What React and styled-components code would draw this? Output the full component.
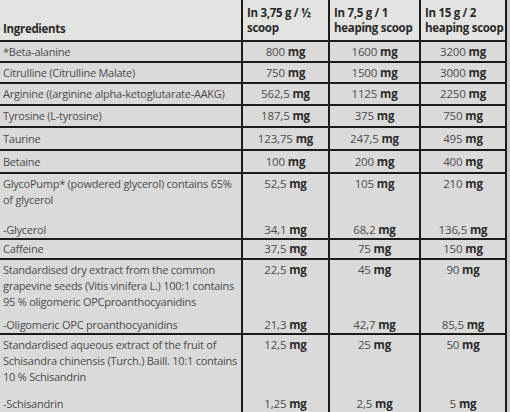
import React from 'react';
import styled, { createGlobalStyle } from 'styled-components';

const GlobalStyle = createGlobalStyle`
  html, body {
    margin: 0;
    padding: 0;
    background: #c9c8c8;
  }
  body {
    font-family: 'Open Sans', 'Liberation Sans', sans-serif;
  }
`;

const Table = styled.div`
  width: 505px;
  height: 412px;
  overflow: hidden;
  display: flex;
  flex-direction: column;
  gap: 2px;
  background: #1b1b1b;
  border-right: 2px solid #1b1b1b;
`;

const Row = styled.div`
  display: grid;
  grid-template-columns: 241px 85px 89px 84px;
  column-gap: 2px;
  height: ${props => props.h}px;
  flex-shrink: 0;
`;

const Cell = styled.div`
  background: ${props => props.head ? '#e3e3e2' : '#dbdada'};
  display: flex;
  flex-direction: column;
  justify-content: ${props => props.multi ? 'space-between' : 'center'};
  align-items: ${props => props.center ? 'center' : 'flex-start'};
  padding: ${props => props.multi ? '2px 3px 0' : '0 3px'};
  font-size: ${props => props.center ? '11.5px' : '11px'};
  line-height: 16px;
  color: #4c4c4c;
  letter-spacing: ${props => props.center ? '-0.15px' : '-0.25px'};
  white-space: nowrap;
  overflow: hidden;
`;

const HeadCell = styled(Cell)`
  justify-content: ${props => props.bottom ? 'flex-end' : 'flex-start'};
  padding: ${props => props.bottom ? '0 3px 4px' : '5px 4px 0'};
  font-weight: 700;
  font-size: 11.5px;
  line-height: 15px;
  color: #2a2a2a;
  letter-spacing: -0.3px;
`;

const Unit = styled.b`
  font-weight: 700;
  color: #2b2b2b;
`;

const Value = ({ n }) => (
  <span>{n} <Unit>mg</Unit></span>
);

const rows = [
  { name: ['*Beta-alanine'], v: ['800', '1600', '3200'], h: 19 },
  { name: ['Citrulline (Citrulline Malate)'], v: ['750', '1500', '3000'], h: 19 },
  { name: ['Arginine ((arginine alpha-ketoglutarate-AAKG)'], v: ['562,5', '1125', '2250'], h: 20 },
  { name: ['Tyrosine (L-tyrosine)'], v: ['187,5', '375', '750'], h: 20 },
  { name: ['Taurine'], v: ['123,75', '247,5', '495'], h: 21 },
  { name: ['Betaine'], v: ['100', '200', '400'], h: 21 },
  {
    name: ['GlycoPump* (powdered glycerol) contains 65%', 'of glycerol'],
    sub: '-Glycerol',
    v: ['52,5', '105', '210'],
    sv: ['34,1', '68,2', '136,5'],
    h: 64,
  },
  { name: ['Caffeine'], v: ['37,5', '75', '150'], h: 18 },
  {
    name: [
      'Standardised dry extract from the common',
      'grapevine seeds (Vitis vinifera L.) 100:1 contains',
      '95 % oligomeric OPCproanthocyanidins',
    ],
    sub: '-Oligomeric OPC proanthocyanidins',
    v: ['22,5', '45', '90'],
    sv: ['21,3', '42,7', '85,5'],
    h: 73,
  },
  {
    name: [
      'Standardised aqueous extract of the fruit of',
      'Schisandra chinensis (Turch.) Baill. 10:1 contains',
      '10 % Schisandrin',
    ],
    sub: '-Schisandrin',
    v: ['12,5', '25', '50'],
    sv: ['1,25', '2,5', '5'],
    h: 77,
  },
];

const App = () => (
  <>
    <GlobalStyle />
    <Table>
      <Row h={40}>
        <HeadCell head bottom>Ingredients</HeadCell>
        <HeadCell head><span>In 3,75 g / ½</span><span>scoop</span></HeadCell>
        <HeadCell head><span>In 7,5 g / 1</span><span>heaping scoop</span></HeadCell>
        <HeadCell head><span>In 15 g / 2</span><span>heaping scoop</span></HeadCell>
      </Row>
      {rows.map((row) => {
        const multi = Boolean(row.sub);
        return (
          <Row key={row.name[0]} h={row.h}>
            <Cell multi={multi}>
              <div>
                {row.name.map((line) => <div key={line}>{line}</div>)}
              </div>
              {multi && <div>{row.sub}</div>}
            </Cell>
            {row.v.map((n, i) => (
              <Cell key={i} multi={multi} center>
                <Value n={n} />
                {multi && <Value n={row.sv[i]} />}
              </Cell>
            ))}
          </Row>
        );
      })}
    </Table>
  </>
);

export default App;
